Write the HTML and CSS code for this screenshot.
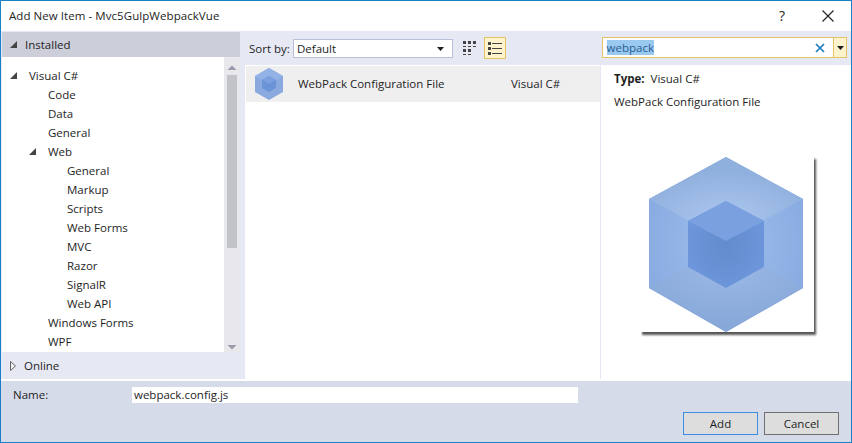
FILE: index.html
```html
<!DOCTYPE html>
<html lang="en">
<head>
<meta charset="utf-8">
<title>Add New Item</title>
<link rel="stylesheet" href="styles.css">
</head>
<body>
<div class="window">
  <header class="titlebar">
    <span class="title">Add New Item - Mvc5GulpWebpackVue</span>
    <span class="help">?</span>
    <svg class="close" width="14" height="14" viewBox="0 0 14 14"><path d="M1.5 1.5L12.5 12.5M12.5 1.5L1.5 12.5" stroke="#1e1e1e" stroke-width="1.1" fill="none"/></svg>
  </header>
  <main class="main">
    <aside class="side">
      <div class="installed">
        <svg class="arrow" width="7" height="7" viewBox="0 0 7 7"><path d="M0 7L7 7L7 0Z" fill="#444"/></svg>
        <span>Installed</span>
      </div>
      <div class="treewrap">
        <ul class="tree">
          <li class="l1"><svg class="arrow" width="7" height="7" viewBox="0 0 7 7"><path d="M0 7L7 7L7 0Z" fill="#444"/></svg>Visual C#</li>
          <li class="l2">Code</li>
          <li class="l2">Data</li>
          <li class="l2">General</li>
          <li class="l2"><svg class="arrow" width="7" height="7" viewBox="0 0 7 7"><path d="M0 7L7 7L7 0Z" fill="#444"/></svg>Web</li>
          <li class="l3">General</li>
          <li class="l3">Markup</li>
          <li class="l3">Scripts</li>
          <li class="l3">Web Forms</li>
          <li class="l3">MVC</li>
          <li class="l3">Razor</li>
          <li class="l3">SignalR</li>
          <li class="l3">Web API</li>
          <li class="l2">Windows Forms</li>
          <li class="l2">WPF</li>
        </ul>
        <div class="scrollbar">
          <svg width="16" height="8" viewBox="0 0 16 8"><path d="M3.5 7L12.5 7L8 2.5Z" fill="#9a9baa"/></svg>
          <div class="track"><div class="thumb"></div></div>
          <svg width="16" height="8" viewBox="0 0 16 8"><path d="M3.5 1L12.5 1L8 5.5Z" fill="#9a9baa"/></svg>
        </div>
      </div>
      <div class="online">
        <svg class="open-arrow" width="6" height="10" viewBox="0 0 6 10"><path d="M0.5 0.5L5.5 5L0.5 9.5Z" fill="#f0f0f0" stroke="#666"/></svg>
        <span>Online</span>
      </div>
    </aside>
    <section class="content">
      <div class="toolbar">
        <label class="sortlabel">Sort by:</label>
        <div class="select"><span>Default</span><svg width="7" height="4" viewBox="0 0 7 4"><path d="M0 0L7 0L3.5 4Z" fill="#1e1e1e"/></svg></div>
        <svg class="gridicon" width="14" height="14" viewBox="0 0 14 14" fill="#444"><path d="M0 0h3v3H0zM5 0h3v3H5zM10 0h3v3h-3zM0 5h3v1H0zM5 5h3v1H5zM10 5h3v1h-3zM0 8h3v3H0zM5 8h3v3H5zM0 13h3v1H0zM5 13h3v1H5z"/></svg>
        <div class="listbtn"><svg width="14" height="13" viewBox="0 0 14 13" fill="#444"><path d="M0 0h3v3H0zM4 1h10v1H4zM0 5h3v3H0zM4 6h10v1H4zM0 10h3v3H0zM4 11h10v1H4z"/></svg></div>
        <div class="search">
          <div class="searchbox"><span class="sel">webpack</span><svg width="10" height="10" viewBox="0 0 10 10"><path d="M1 1L9 9M9 1L1 9" stroke="#1c7cc4" stroke-width="1.7" fill="none"/></svg></div>
          <div class="searchdrop"><svg width="7" height="4" viewBox="0 0 7 4"><path d="M0 0L7 0L3.500 4Z" fill="#1e1e1e"/></svg></div>
        </div>
      </div>
      <div class="panes">
        <div class="results">
          <div class="row">
            <svg class="rowicon" width="30" height="32" viewBox="0 0 30 32">
              <path d="M15 0L29 8V24L15 32L1 24V8Z" fill="#8aa9df"/>
              <path d="M15 0L29 8L15 16L1 8Z" fill="#93b2e6"/>
              <path d="M15 8L22 12V20L15 24L8 20V12Z" fill="#6a93d8"/>
              <path d="M15 8L22 12L15 16L8 12Z" fill="#7aa0e0"/>
            </svg>
            <span class="rowname">WebPack Configuration File</span>
            <span class="rowtype">Visual C#</span>
          </div>
        </div>
        <div class="details">
          <div class="dtype"><b>Type:</b><span>Visual C#</span></div>
          <div class="ddesc">WebPack Configuration File</div>
          <svg class="preview" width="180" height="181" viewBox="0 0 180 181">
            <defs>
              <radialGradient id="top" cx="50%" cy="75%" r="60%"><stop offset="0" stop-color="#adc8f0"/><stop offset="1" stop-color="#8fafdc"/></radialGradient>
              <radialGradient id="lf" cx="50%" cy="50%" r="60%"><stop offset="0" stop-color="#a0bfec"/><stop offset="1" stop-color="#86a9e0"/></radialGradient>
              <radialGradient id="bt" cx="50%" cy="25%" r="70%"><stop offset="0" stop-color="#9cb9e6"/><stop offset="1" stop-color="#86a7d8"/></radialGradient>
              <radialGradient id="core" cx="50%" cy="50%" r="55%"><stop offset="0" stop-color="#628ccc"/><stop offset="1" stop-color="#6d96dc"/></radialGradient>
              <filter id="soft" x="-5%" y="-5%" width="110%" height="110%"><feGaussianBlur stdDeviation="1"/></filter>
            </defs>
            <rect x="1" y="2" width="174" height="176" fill="#555" filter="url(#soft)"/>
            <rect x="0" y="0" width="173" height="175" fill="#fff"/>
            <path d="M85 0L162 42V131L85 175L8 131V42Z" fill="url(#lf)"/>
            <path d="M85 0L162 42L85 84L8 42Z" fill="url(#top)"/>
            <path d="M8 131L85 88L162 131L85 175Z" fill="url(#bt)"/>
            <path d="M85 44L123 64V110L85 131L47 110V64Z" fill="url(#core)"/>
            <path d="M85 44L123 64L85 84L47 64Z" fill="#7aa0e0"/>
          </svg>
        </div>
      </div>
    </section>
  </main>
  <footer class="footer">
    <div class="namerow">
      <label class="namelabel">Name:</label>
      <div class="nameinput">webpack.config.js</div>
    </div>
    <div class="buttons">
      <button class="btn primary">Add</button>
      <button class="btn">Cancel</button>
    </div>
  </footer>
</div>
</body>
</html>
```
FILE: styles.css
```css
* { box-sizing: border-box; }
html, body { margin: 0; padding: 0; }
body { width: 852px; height: 443px; overflow: hidden; font: 11.5px/16px "Open Sans", "Noto Sans", sans-serif; color: #1e1e1e; }
.window { width: 852px; height: 443px; border: 1px solid #1b80c8; display: flex; flex-direction: column; background: #fff; }
.titlebar { height: 30px; flex: none; display: flex; align-items: center; padding-left: 8px; }
.title { flex: 1; letter-spacing: 0.06px; }
.help { font-size: 14px; margin-right: 36px; }
.close { margin-right: 16px; }
.main { flex: 1; display: flex; background: #e6e9f4; min-height: 0; }
.side { width: 239px; flex: none; padding: 1px 0 0 1px; display: flex; flex-direction: column; }
.installed { height: 25px; flex: none; background: #ccceda; display: flex; align-items: center; padding-left: 8px; gap: 8px; }
.treewrap { height: 295px; flex: none; background: #fff; display: flex; }
.tree { flex: 1; list-style: none; margin: 0; padding: 9px 0 0; overflow: hidden; }
.tree li { height: 19px; line-height: 19px; display: flex; align-items: center; white-space: nowrap; }
.tree .arrow { margin-left: -19px; margin-right: 12px; }
.l1 { padding-left: 27px; }
.l2 { padding-left: 46px; }
.l3 { padding-left: 65px; }
.scrollbar { width: 16px; flex: none; background: #e8e8ec; display: flex; flex-direction: column; padding-top: 6px; }
.scrollbar svg { flex: none; display: block; }
.track { flex: 1; padding: 4px 3px 0; }
.thumb { height: 173px; background: #c2c3c9; }
.online { flex: 1; display: flex; align-items: center; padding-left: 8px; gap: 8px; }
.content { flex: 1; margin-left: 5px; display: flex; flex-direction: column; min-width: 0; }
.toolbar { height: 34px; flex: none; display: flex; align-items: center; padding: 1px 4px 0 4px; }
.sortlabel { width: 44px; flex: none; }
.select { width: 160px; height: 19px; border: 1px solid #b9c0d9; background: #fff; display: flex; align-items: center; justify-content: space-between; padding: 0 8px 0 3px; }
.gridicon { margin: 0 0 1px 10px; }
.listbtn { width: 22px; height: 22px; margin: 0 0 1px 7px; background: #fff3cd; border: 1px solid #e5c365; display: flex; align-items: center; justify-content: center; }
.search { margin: 0 0 2px 96px; width: 246px; height: 21px; display: flex; }
.searchbox { flex: 1; border: 1px solid #e5c365; background: #fff; display: flex; align-items: center; justify-content: space-between; padding: 0 8px 0 4px; }
.sel { background: #99c9ef; color: #2a5d92; line-height: 15px; }
.searchdrop { width: 13px; background: #fff3cd; border: 1px solid #e5c365; border-left: 0; display: flex; align-items: center; justify-content: center; }
.panes { flex: 1; display: flex; background: #fff; min-height: 0; }
.results { width: 356px; flex: none; padding: 1px 0 0 1px; border-right: 1px solid #e6e9f4; }
.row { height: 36px; background: #efeff0; display: flex; align-items: center; padding-left: 8px; }
.rowicon { flex: none; }
.rowname { margin-left: 14px; width: 213px; }
.details { flex: 1; padding: 6px 0 0 13px; display: flex; flex-direction: column; align-items: flex-start; }
.dtype { height: 16px; display: flex; gap: 6px; }
.ddesc { margin-top: 7px; }
.preview { margin-top: 47px; margin-left: 27px; display: block; }
.footer { height: 61px; flex: none; margin-top: 2px; background: #d6dbe9; padding: 6px 12px 0 12px; }
.namerow { display: flex; align-items: center; height: 16px; }
.namelabel { width: 119px; flex: none; }
.nameinput { width: 446px; height: 16px; background: #fff; padding-left: 2px; line-height: 15px; }
.buttons { display: flex; justify-content: flex-end; gap: 6px; margin-top: 9px; }
.btn { width: 75px; height: 23px; border: 1px solid #707070; background: #dddddd; font: inherit; color: #1e1e1e; padding: 0; }
.btn.primary { border-color: #3c8ee0; }
```
